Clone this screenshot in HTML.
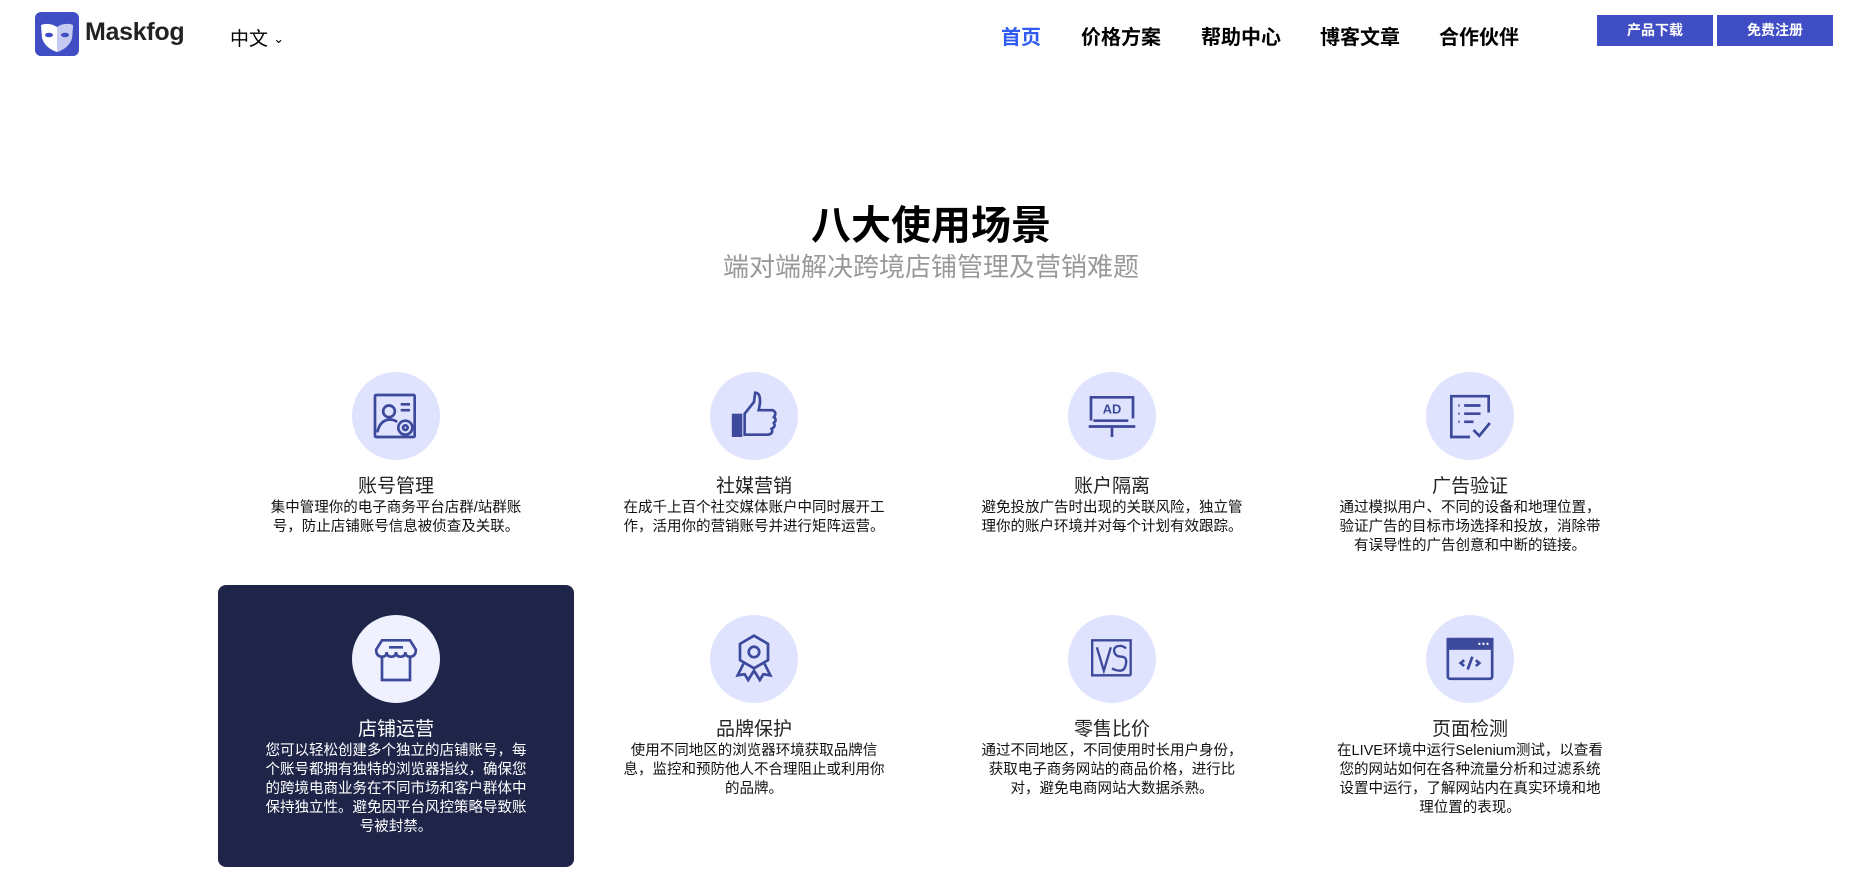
<!DOCTYPE html>
<html><head><meta charset="utf-8">
<style>
*{margin:0;padding:0;box-sizing:border-box}
body{width:1862px;height:882px;background:#fff;font-family:"Liberation Sans","Noto Sans CJK SC",sans-serif;position:relative;overflow:hidden;color:#000}
.abs{position:absolute}
.nav a{position:absolute;top:21px;font-size:20px;font-weight:bold;color:#000;text-decoration:none;white-space:nowrap}
.btn{position:absolute;top:15px;width:116px;height:31px;background:#3f4ec4;color:#fff;font-size:14px;font-weight:bold;text-align:center;line-height:31px}
.card{position:absolute;width:300px;text-align:center}
.circ{width:88px;height:88px;border-radius:50%;background:#e0e3fd;margin:0 auto;display:flex;align-items:center;justify-content:center}
.circ svg{width:56px;height:56px}
.t{font-size:19px;margin-top:16px;line-height:22px;color:#222}
.d{font-size:14.5px;line-height:19px;width:268px;margin:1px auto 0;color:#111}
.dark{position:absolute;left:218px;top:585px;width:356px;height:282px;background:#1f2549;border-radius:8px}
</style></head><body>
<svg class="abs" style="left:35px;top:12px" width="44" height="44" viewBox="0 0 44 44"><rect width="44" height="44" rx="6" fill="#3f4ec4"/><path d="M6 13 Q14 10 22 15 Q30 10 38 13 L37 26 Q34 36 22 40 Q10 36 7 26Z" fill="#fff"/><path d="M22 15 Q30 10 38 13 L37 26 Q34 36 22 40Z" fill="#c5cbf0"/><ellipse cx="14" cy="23" rx="4" ry="2.3" fill="#3f4ec4"/><ellipse cx="30" cy="23" rx="4" ry="2.3" fill="#3f4ec4"/></svg>
<div class="abs" style="left:85px;top:18px;font-size:25px;font-weight:bold;color:#222;letter-spacing:-0.3px">Maskfog</div>
<div class="abs" style="left:230px;top:24px;font-size:19px">中文 <span style="font-size:13px;position:relative;top:-2px">&#8964;</span></div>
<div class="nav">
<a style="left:1001px;color:#2f5bf0">首页</a>
<a style="left:1081px">价格方案</a>
<a style="left:1201px">帮助中心</a>
<a style="left:1320px">博客文章</a>
<a style="left:1439px">合作伙伴</a>
</div>
<div class="btn" style="left:1597px">产品下载</div>
<div class="btn" style="left:1717px">免费注册</div>
<div class="abs" style="left:0;width:1862px;top:193px;text-align:center;font-size:40px;font-weight:bold">八大使用场景</div>
<div class="abs" style="left:0;width:1862px;top:247px;text-align:center;font-size:26px;color:#999">端对端解决跨境店铺管理及营销难题</div>
<div class="dark"></div>
<div class="card" style="left:246px;top:372px">
<div class="circ"><svg viewBox="0 0 48 48" fill="none" stroke="#3d4a9c" stroke-width="2.3"><rect x="6" y="6" width="34" height="36" rx="1"/><circle cx="18" cy="20" r="5"/><path d="M8 38 Q10 28 18 27 Q22 27 25 29"/><path d="M28 14h8M28 19h8"/><circle cx="32" cy="34" r="6"/><circle cx="32" cy="34" r="2"/></svg></div>
<div class="t">账号管理</div><div class="d">集中管理你的电子商务平台店群/站群账号，防止店铺账号信息被侦查及关联。</div></div>
<div class="card" style="left:604px;top:372px">
<div class="circ"><svg viewBox="0 0 48 48"><rect x="5" y="22" width="9" height="20" fill="#3d4a9c"/><path d="M16 22 L24 12 L25 4 Q30 4 29 14 L28 19 L40 19 Q44 21 41 25 Q44 27 41 30 Q43 33 39 35 Q41 39 36 40 L16 40Z" fill="none" stroke="#3d4a9c" stroke-width="2.3"/></svg></div>
<div class="t">社媒营销</div><div class="d">在成千上百个社交媒体账户中同时展开工作，活用你的营销账号并进行矩阵运营。</div></div>
<div class="card" style="left:962px;top:372px">
<div class="circ"><svg viewBox="0 0 48 48" fill="none" stroke="#3d4a9c" stroke-width="2.3"><path d="M6 28V8h36v18M8 28h30M4 33h40M24 33v9"/><text x="24" y="22" text-anchor="middle" font-family="Liberation Sans" font-weight="bold" font-size="11" fill="#3d4a9c" stroke="none">AD</text></svg></div>
<div class="t">账户隔离</div><div class="d">避免投放广告时出现的关联风险，独立管理你的账户环境并对每个计划有效跟踪。</div></div>
<div class="card" style="left:1320px;top:372px">
<div class="circ"><svg viewBox="0 0 48 48" fill="none" stroke="#3d4a9c" stroke-width="2.3"><path d="M24 42H8V7h32v14"/><path d="M14 15h1M19 15h14M14 22h1M19 22h14M14 29h1M19 29h8M27 36l5 5 9-11"/></svg></div>
<div class="t">广告验证</div><div class="d">通过模拟用户、不同的设备和地理位置，验证广告的目标市场选择和投放，消除带有误导性的广告创意和中断的链接。</div></div>
<div class="card" style="left:246px;top:615px">
<div class="circ" style="background:#f0f1fe"><svg viewBox="0 0 48 48" fill="none" stroke="#3d4a9c" stroke-width="2.3"><path d="M12 8h24l5 8q0 6-5 6q-4 0-4-4q0 4-4 4t-4-4q0 4-4 4t-4-4q0 4-4 4q-5 0-5-6z"/><path d="M12 22v20h24V22M18 14h12"/></svg></div>
<div class="t" style="color:#fff">店铺运营</div><div class="d" style="color:#fff">您可以轻松创建多个独立的店铺账号，每个账号都拥有独特的浏览器指纹，确保您的跨境电商业务在不同市场和客户群体中保持独立性。避免因平台风控策略导致账号被封禁。</div></div>
<div class="card" style="left:604px;top:615px">
<div class="circ"><svg viewBox="0 0 48 48" fill="none" stroke="#3d4a9c" stroke-width="2.3"><path d="M24 4l12 7v14l-12 7-12-7V11z"/><circle cx="24" cy="18" r="4.5"/><path d="M15 28l-5 10 6-1 3 5 5-8 5 8 3-5 6 1-5-10"/></svg></div>
<div class="t">品牌保护</div><div class="d">使用不同地区的浏览器环境获取品牌信息，监控和预防他人不合理阻止或利用你的品牌。</div></div>
<div class="card" style="left:962px;top:615px">
<div class="circ"><svg viewBox="0 0 48 48" fill="none" stroke="#3d4a9c" stroke-width="2"><path d="M40 38H7V8h33v30"/><path d="M11 14l6 20 6-20"/><path d="M36 15q-3-3-7-2t-3 5 6 4 4 6-5 6-7-2"/></svg></div>
<div class="t">零售比价</div><div class="d">通过不同地区，不同使用时长用户身份，获取电子商务网站的商品价格，进行比对，避免电商网站大数据杀熟。</div></div>
<div class="card" style="left:1320px;top:615px">
<div class="circ"><svg viewBox="0 0 48 48" fill="none" stroke="#3d4a9c" stroke-width="2.3"><rect x="5" y="7" width="38" height="34" rx="2"/><rect x="5" y="7" width="38" height="8" fill="#3d4a9c"/><path d="M19 25l-3 2.5 3 2.5M29 25l3 2.5-3 2.5M26 22l-4 11"/><circle cx="32" cy="11" r="1" fill="#fff" stroke="none"/><circle cx="35.5" cy="11" r="1" fill="#fff" stroke="none"/><circle cx="39" cy="11" r="1" fill="#fff" stroke="none"/></svg></div>
<div class="t">页面检测</div><div class="d">在LIVE环境中运行Selenium测试，以查看您的网站如何在各种流量分析和过滤系统设置中运行，了解网站内在真实环境和地理位置的表现。</div></div>
</body></html>
